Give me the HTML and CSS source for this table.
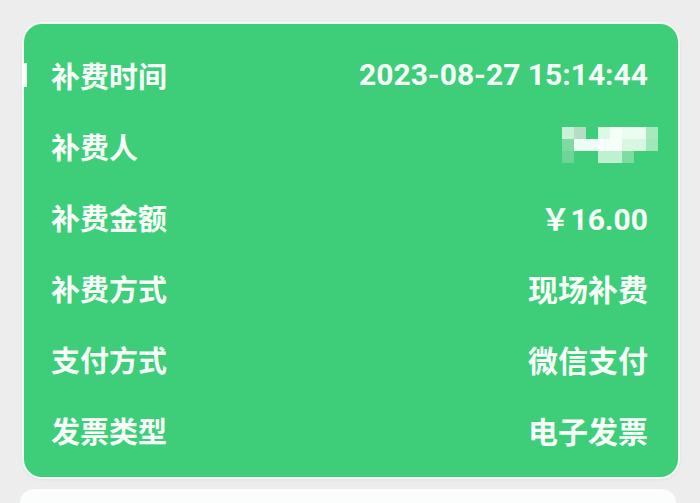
FILE: index.html
```html
<!DOCTYPE html>
<html lang="zh">
<head>
<meta charset="utf-8">
<link rel="stylesheet" href="styles.css">
</head>
<body>
<div class="page">
  <div class="card">
    <span class="tick"></span>
    <div class="row"><span class="label">补费时间</span><span class="value num">2023-08-27 15:14:44</span></div>
    <div class="row"><span class="label">补费人</span>
      <span class="value">
        <svg class="mosaic" width="96" height="38" viewBox="0 0 96 38">
          <rect x="0" y="0" width="12" height="12" fill="#c9f1d6"/>
          <rect x="12" y="0" width="12" height="12" fill="#b5dcc4"/>
          <rect x="36" y="0" width="12" height="12" fill="#def8e6"/>
          <rect x="48" y="0" width="12" height="12" fill="#f4fff8"/>
          <rect x="60" y="0" width="24" height="12" fill="#eafdf0"/>
          <rect x="84" y="0" width="12" height="12" fill="#a6e9bf"/>
          <rect x="0" y="12" width="12" height="12" fill="#7fd9a2"/>
          <rect x="12" y="12" width="24" height="12" fill="#eefdf3"/>
          <rect x="36" y="12" width="24" height="12" fill="#f6fff9"/>
          <rect x="60" y="12" width="24" height="12" fill="#d8f7e2"/>
          <rect x="84" y="12" width="12" height="12" fill="#9fe7ba"/>
          <rect x="0" y="24" width="12" height="12" fill="#6fd497"/>
          <rect x="36" y="24" width="24" height="12" fill="#bff0cf"/>
          <rect x="60" y="24" width="12" height="12" fill="#7ddca1"/>
        </svg>
      </span>
    </div>
    <div class="row"><span class="label">补费金额</span><span class="value num">￥16.00</span></div>
    <div class="row"><span class="label">补费方式</span><span class="value">现场补费</span></div>
    <div class="row"><span class="label">支付方式</span><span class="value">微信支付</span></div>
    <div class="row"><span class="label">发票类型</span><span class="value">电子发票</span></div>
  </div>
  <div class="card2"></div>
</div>
</body>
</html>
```
FILE: styles.css
```css
html, body {
  margin: 0;
  padding: 0;
  background: #ededed;
}
body {
  font-family: "Noto Sans CJK SC", "Noto Sans", sans-serif;
  width: 700px;
  height: 503px;
  overflow: hidden;
}
.page {
  padding: 22px 20px 0 22px;
  display: flex;
  flex-direction: column;
  gap: 10px;
}
.card {
  position: relative;
  background: #3ecd79;
  border: 2px solid #f3fbf5;
  border-radius: 20px;
  padding: 15px 30px 12px 27px;
  display: flex;
  flex-direction: column;
  box-shadow: 0 1px 3px rgba(0,0,0,0.06);
}
.tick {
  position: absolute;
  left: -2px;
  top: 39px;
  width: 5px;
  height: 24px;
  background: #f7fff9;
}
.row {
  height: 71px;
  display: flex;
  align-items: center;
  justify-content: space-between;
  color: #f7fff9;
  font-weight: 700;
  font-size: 29px;
}
.value {
  display: flex;
  align-items: center;
  font-size: 30px;
}
.num {
  font-family: Roboto, "Noto Sans CJK SC", sans-serif;
  font-size: 30px;
  font-weight: 700;
}
.mosaic {
  display: block;
  margin-right: -10px;
}
.card2 {
  height: 40px;
  background: #fbfcfc;
  border-radius: 14px;
  margin: 0 4px 0 -2px;
}
```
